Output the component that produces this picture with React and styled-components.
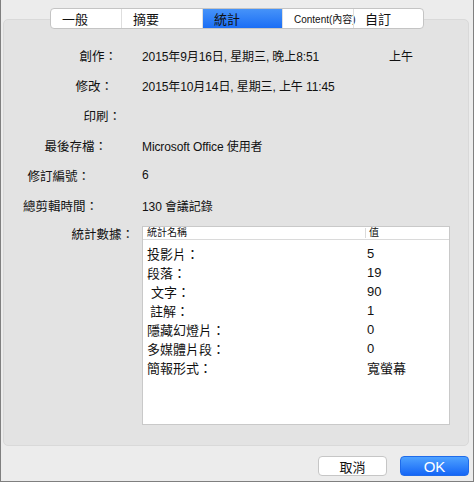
import React from "react";
import styled, { createGlobalStyle } from "styled-components";

const Global = createGlobalStyle`
  html, body { margin: 0; padding: 0; background: #ececec; }
  body { font-family: "Liberation Sans", "Noto Sans CJK TC", sans-serif; color: #111; }
  * { box-sizing: border-box; }
`;

const Window = styled.div`
  width: 474px;
  height: 482px;
  background: #ececec;
  border-left: 1px solid #7f7f7f;
  border-right: 1px solid #7f7f7f;
  border-bottom: 1px solid #7f7f7f;
  padding-top: 8px;
  display: flex;
  flex-direction: column;
`;

const TabBar = styled.div`
  position: relative;
  z-index: 1;
  margin-left: 49px;
  width: 374px;
  height: 21px;
  display: flex;
  background: #fff;
  border: 1px solid #c4c4c4;
  border-radius: 4px;
  overflow: hidden;
`;

const Tab = styled.div`
  width: ${(p) => p.w}px;
  flex: none;
  padding-left: 11px;
  display: flex;
  align-items: center;
  font-size: ${(p) => (p.small ? 10 : 13)}px;
  white-space: nowrap;
  color: #111;
  border-left: ${(p) => (p.first ? "none" : "1px solid #dedede")};
  background: ${(p) =>
    p.active ? "linear-gradient(#4693f9, #1b6ef5)" : "transparent"};
  overflow: visible;
  position: relative;
`;

const Panel = styled.div`
  margin: -10px 4px 0 2px;
  height: 427px;
  background: #e3e3e3;
  border: 1px solid #d9d9d9;
  border-radius: 5px;
  padding-top: 20px;
  display: flex;
  flex-direction: column;
`;

const Row = styled.div`
  display: flex;
  align-items: ${(p) => (p.top ? "flex-start" : "center")};
  height: ${(p) => (p.h ? p.h + "px" : "30px")};
  margin-top: ${(p) => p.mt || 0}px;
  font-size: 12px;
`;

const Label = styled.div`
  width: 138px;
  flex: none;
  text-align: right;
  padding-right: ${(p) => p.pr}px;
  white-space: nowrap;
  font-size: 12.5px;
  line-height: ${(p) => (p.lh ? p.lh + "px" : "normal")};
`;

const Value = styled.div`
  white-space: nowrap;
  display: flex;
  letter-spacing: -0.1px;
`;

const Aside = styled.span`
  margin-left: ${(p) => p.ml}px;
`;

const Table = styled.div`
  width: 308px;
  height: 199px;
  background: #fff;
  border: 1px solid #c9c9c9;
  display: flex;
  flex-direction: column;
`;

const Header = styled.div`
  height: 13px;
  display: grid;
  grid-template-columns: 222px 1fr;
  border-bottom: 1px solid #dadada;
  font-size: 10px;
  line-height: 12px;
`;

const HeadCell = styled.div`
  padding-left: ${(p) => (p.sep ? 3 : 4)}px;
  border-left: ${(p) => (p.sep ? "1px solid #dadada" : "none")};
  margin: ${(p) => (p.sep ? "1px 0 1px" : 0)};
  line-height: ${(p) => (p.sep ? 10 : 12)}px;
`;

const Rows = styled.div`
  padding-top: 4px;
`;

const StatRow = styled.div`
  height: 19px;
  display: grid;
  grid-template-columns: 223px 1fr;
  align-items: center;
  font-size: 13px;
`;

const StatName = styled.div`
  padding-left: ${(p) => 4 + (p.indent || 0)}px;
  white-space: nowrap;
`;

const StatValue = styled.div`
  padding-left: 1px;
`;

const Footer = styled.div`
  display: flex;
  justify-content: flex-end;
  gap: 13px;
  margin-top: 10px;
  padding-right: 4px;
`;

const Button = styled.div`
  width: 69px;
  height: 20px;
  border-radius: 4px;
  display: flex;
  align-items: center;
  justify-content: center;
  font-size: ${(p) => (p.primary ? 15 : 13)}px;
  color: ${(p) => (p.primary ? "#fff" : "#111")};
  background: ${(p) =>
    p.primary ? "linear-gradient(#4ea2ff, #1566f6)" : "#fff"};
  border: 1px solid ${(p) => (p.primary ? "#1f6bea" : "#c6c6c6")};
`;

const info = [
  { label: "創作：", pr: 25, value: "2015年9月16日, 星期三, 晚上8:51", aside: "上午" },
  { label: "修改：", pr: 29, value: "2015年10月14日, 星期三, 上午 11:45" },
  { label: "印刷：", pr: 21, value: "" },
  { label: "最後存檔：", pr: 35, value: "Microsoft Office 使用者" },
  { label: "修訂編號：", pr: 52, value: "6" },
  { label: "總剪輯時間：", pr: 44, value: "130 會議記錄" },
];

const stats = [
  ["投影片：", "5"],
  ["段落：", "19"],
  ["文字：", "90", 4],
  ["註解：", "1", 3],
  ["隱藏幻燈片：", "0"],
  ["多媒體片段：", "0"],
  ["簡報形式：", "寬螢幕"],
];

export default function App() {
  return (
    <>
      <Global />
      <Window>
        <TabBar>
          <Tab first w={70}>一般</Tab>
          <Tab w={81}>摘要</Tab>
          <Tab w={80} active>統計</Tab>
          <Tab w={71} small>Content(內容)</Tab>
          <Tab w={72}>自訂</Tab>
        </TabBar>
        <Panel>
          {info.map((r) => (
            <Row key={r.label}>
              <Label pr={r.pr}>{r.label}</Label>
              <Value>
                {r.value}
                {r.aside && <Aside ml={70}>{r.aside}</Aside>}
              </Value>
            </Row>
          ))}
          <Row top h={199} mt={6}>
            <Label pr={8} lh={18}>統計數據：</Label>
            <Table>
              <Header>
                <HeadCell>統計名稱</HeadCell>
                <HeadCell sep>值</HeadCell>
              </Header>
              <Rows>
                {stats.map(([n, v, ind]) => (
                  <StatRow key={n}>
                    <StatName indent={ind}>{n}</StatName>
                    <StatValue>{v}</StatValue>
                  </StatRow>
                ))}
              </Rows>
            </Table>
          </Row>
        </Panel>
        <Footer>
          <Button>取消</Button>
          <Button primary>OK</Button>
        </Footer>
      </Window>
    </>
  );
}
